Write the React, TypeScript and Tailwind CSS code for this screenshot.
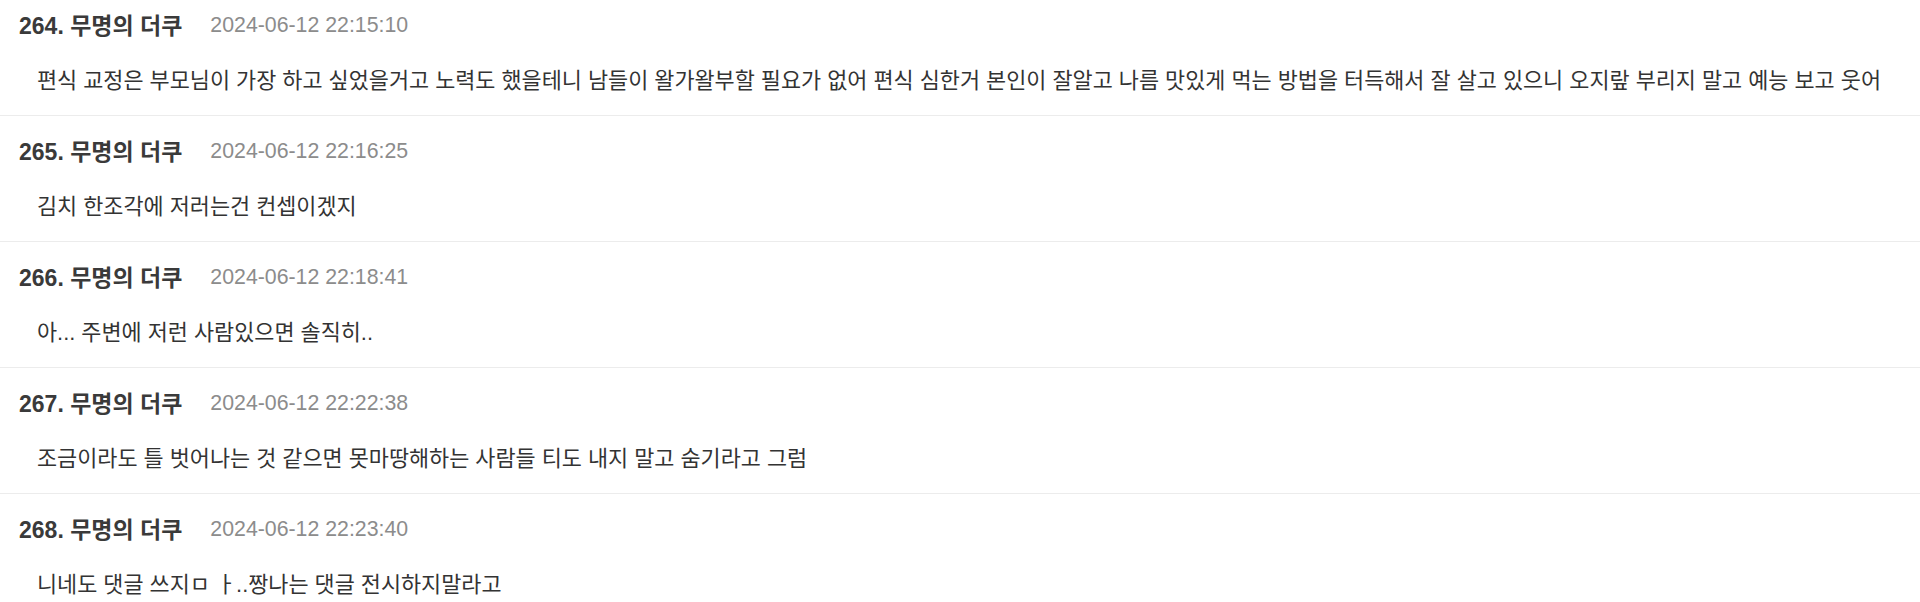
const comments = [
  {
    no: 264,
    name: '무명의 더쿠',
    date: '2024-06-12 22:15:10',
    body: '편식 교정은 부모님이 가장 하고 싶었을거고 노력도 했을테니 남들이 왈가왈부할 필요가 없어 편식 심한거 본인이 잘알고 나름 맛있게 먹는 방법을 터득해서 잘 살고 있으니 오지랖 부리지 말고 예능 보고 웃어',
  },
  { no: 265, name: '무명의 더쿠', date: '2024-06-12 22:16:25', body: '김치 한조각에 저러는건 컨셉이겠지' },
  { no: 266, name: '무명의 더쿠', date: '2024-06-12 22:18:41', body: '아... 주변에 저런 사람있으면 솔직히..' },
  { no: 267, name: '무명의 더쿠', date: '2024-06-12 22:22:38', body: '조금이라도 틀 벗어나는 것 같으면 못마땅해하는 사람들 티도 내지 말고 숨기라고 그럼' },
  { no: 268, name: '무명의 더쿠', date: '2024-06-12 22:23:40', body: '니네도 댓글 쓰지ㅁ ㅏ..짱나는 댓글 전시하지말라고' },
];

export default function App() {
  return (
    <div className="h-[602px] overflow-hidden bg-white font-['Liberation_Sans','Noto_Sans_CJK_KR',sans-serif]">
      <ul className="-mt-[10px]">
        {comments.map((c) => (
          <li key={c.no} className="border-b border-[#ececec] pt-[21px] pb-[19px]">
            <div className="flex items-center pl-[19px] h-[30px]">
              <span className="text-[23px] font-bold text-[#3a3a3a]">
                {c.no}. {c.name}
              </span>
              <span className="ml-[28px] text-[21.3px] text-[#8c8c8c]">{c.date}</span>
            </div>
            <p className="mt-[25px] pl-[37px] h-[30px] leading-[30px] text-[21.85px] text-[#333333]">{c.body}</p>
          </li>
        ))}
      </ul>
    </div>
  );
}
